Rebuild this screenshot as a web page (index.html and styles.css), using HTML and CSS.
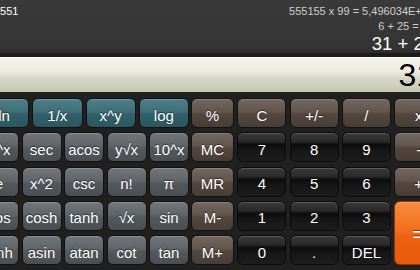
FILE: index.html
```html
<!DOCTYPE html>
<html lang="en">
<head>
  <meta charset="UTF-8">
  <title>Calculator</title>
  <link rel="stylesheet" href="styles.css">
</head>
<body>

<div class="calc">
  <!-- history -->
  <div class="history">
    <div class="memory-value">5551</div>
    <div class="history-lines">
      <div class="line">555155 x 99 = 5,496034E+07</div>
      <div class="line">6 + 25 = 31</div>
      <div class="line current">31 + 25</div>
    </div>
  </div>

  <!-- display -->
  <div class="display">31</div>

  <!-- keypad -->
  <div class="keys">
    <div class="sci">
      <div class="sci-row wide">
        <div class="key teal">ln</div>
        <div class="key teal">1/x</div>
        <div class="key teal">x^y</div>
        <div class="key teal">log</div>
      </div>
      <div class="sci-row">
        <div class="key gray">e^x</div>
        <div class="key gray">sec</div>
        <div class="key gray">acos</div>
        <div class="key gray">y√x</div>
        <div class="key gray">10^x</div>
      </div>
      <div class="sci-row">
        <div class="key gray">e</div>
        <div class="key gray">x^2</div>
        <div class="key gray">csc</div>
        <div class="key gray">n!</div>
        <div class="key gray">π</div>
      </div>
      <div class="sci-row">
        <div class="key gray">cos</div>
        <div class="key gray">cosh</div>
        <div class="key gray">tanh</div>
        <div class="key gray">√x</div>
        <div class="key gray">sin</div>
      </div>
      <div class="sci-row">
        <div class="key gray">sinh</div>
        <div class="key gray">asin</div>
        <div class="key gray">atan</div>
        <div class="key gray">cot</div>
        <div class="key gray">tan</div>
      </div>
    </div>

    <div class="pad">
      <div class="key brown">%</div>
      <div class="key brown">C</div>
      <div class="key brown">+/-</div>
      <div class="key brown">/</div>
      <div class="key brown">x</div>

      <div class="key brown">MC</div>
      <div class="key black">7</div>
      <div class="key black">8</div>
      <div class="key black">9</div>
      <div class="key brown">-</div>

      <div class="key brown">MR</div>
      <div class="key black">4</div>
      <div class="key black">5</div>
      <div class="key black">6</div>
      <div class="key brown">+</div>

      <div class="key brown">M-</div>
      <div class="key black">1</div>
      <div class="key black">2</div>
      <div class="key black">3</div>
      <div class="key orange equals">=</div>

      <div class="key brown">M+</div>
      <div class="key black">0</div>
      <div class="key black">.</div>
      <div class="key black">DEL</div>
    </div>
  </div>
</div>

</body>
</html>
```

FILE: styles.css
```css
/* page */
body {
  margin: 0;
  overflow: hidden;
  background-color: #202020;
  font-family: "Liberation Sans", Arial, sans-serif;
  color: #fff;
}

/* whole calculator (wider than the window, cropped on both sides) */
.calc {
  width: 470px;
  margin-left: -21px;
}

/* history panel */
.history {
  height: 57px;
  box-sizing: border-box;
  display: flex;
  justify-content: space-between;
  background: linear-gradient(#3a3a3a, #343434 90%, #2c2c2c);
  border-bottom: 4px solid #1c1c1c;
  padding: 4px 15px 0 15px;
}
.memory-value {
  font-size: 11px;
  line-height: 14.5px;
}
.history-lines {
  text-align: right;
}
.line {
  font-size: 11px;
  line-height: 14.5px;
  color: #cfcfcf;
}
.line.current {
  font-size: 18.5px;
  line-height: 20px;
  color: #fff;
  margin-top: 1px;
}

/* main display */
.display {
  height: 35px;
  box-sizing: border-box;
  padding-right: 15px;
  text-align: right;
  font-size: 32px;
  line-height: 35px;
  color: #000;
  background: linear-gradient(#f3f3ea 0%, #ecece2 40%, #d6d8c6 60%, #c6c9b0 100%);
  border-top: 1px solid #fafaf2;
}

/* keypad */
.keys {
  display: flex;
  gap: 2px;
  padding-top: 6px;
  height: 180px;
}
.sci {
  width: 210px;
  display: flex;
  flex-direction: column;
  gap: 4.25px;
}
.sci-row {
  display: flex;
  gap: 2.5px;
}
.sci-row .key {
  flex: 1;
}
.sci-row.wide {
  gap: 3px;
}
.pad {
  display: grid;
  grid-template-columns: 43px repeat(4, 49px);
  grid-template-rows: repeat(5, 30px);
  column-gap: 3.3px;
  row-gap: 4.25px;
}

/* a single key */
.key {
  height: 30px;
  box-sizing: border-box;
  border: 1px solid #111;
  border-radius: 6px;
  display: flex;
  align-items: center;
  justify-content: center;
  padding-top: 4px;
  font-size: 15px;
  text-shadow: 0 -1px 1px rgba(0, 0, 0, 0.5);
  box-shadow: inset 0 1px 0 rgba(255, 255, 255, 0.18);
}
.teal {
  background: linear-gradient(#4e7f88 0%, #3f6f78 45%, #31606a 55%, #2b5760 100%);
}
.gray {
  background: linear-gradient(#72777b 0%, #606569 45%, #53585c 55%, #4a4f53 100%);
}
.brown {
  background: linear-gradient(#74675e 0%, #61554e 45%, #52463e 55%, #493e37 100%);
}
.black {
  background: linear-gradient(#393939 0%, #2a2a2a 30%, #0c0c0c 42%, #161616 60%, #1d1d1d 100%);
  border-color: #0a0a0a;
}
.orange {
  background: linear-gradient(#f98a3c 0%, #f2701f 45%, #ec6212 55%, #e65a0c 100%);
  border-color: #8a3a08;
}
.equals {
  grid-row: span 2;
  height: auto;
  font-size: 22px;
}
```
